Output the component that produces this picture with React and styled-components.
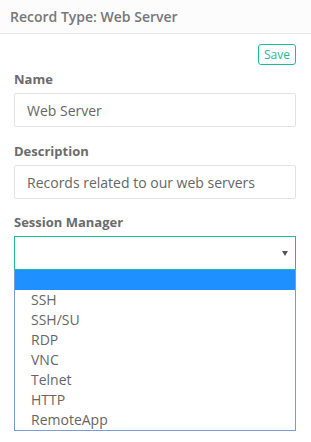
import React, { useState } from "react";
import styled, { createGlobalStyle } from "styled-components";

const GlobalStyle = createGlobalStyle`
  body {
    margin: 0;
    background: #fff;
    font-family: "Open Sans", "Liberation Sans", sans-serif;
  }
`;

const Panel = styled.div`
  width: 311px;
  height: 442px;
  background: #fff;
  overflow: hidden;
`;

const Header = styled.div`
  height: 33px;
  display: flex;
  align-items: center;
  padding: 0 10px;
  border-bottom: 1px solid #e6e6e6;
  background: #fcfcfc;
  font-size: 14px;
  font-weight: 600;
  color: #777;
`;

const Body = styled.div`
  padding: 10px 15px 0 14px;
`;

const Toolbar = styled.div`
  display: flex;
  justify-content: flex-end;
`;

const SaveButton = styled.button`
  height: 21px;
  padding: 0 5px;
  background: #fff;
  border: 1px solid #1abc9c;
  border-radius: 3px;
  color: #1abc9c;
  font-family: inherit;
  font-size: 12px;
  line-height: 19px;
  cursor: pointer;
`;

const Field = styled.div`
  margin-top: ${(p) => p.gap}px;
`;

const Label = styled.label`
  display: block;
  font-size: 13px;
  line-height: 18px;
  font-weight: 700;
  color: #6b6b6b;
  margin-bottom: 5px;
`;

const Input = styled.input`
  box-sizing: border-box;
  width: 100%;
  height: 34px;
  padding: 0 12px;
  border: 1px solid #e3e3e3;
  border-radius: 2px;
  font-family: inherit;
  font-size: 14px;
  color: #666;
  outline: none;
`;

const SelectBox = styled.div`
  box-sizing: border-box;
  height: 34px;
  border: 1px solid #1abc9c;
  display: flex;
  align-items: center;
  justify-content: flex-end;
  padding-right: 7px;
`;

const Arrow = styled.span`
  width: 0;
  height: 0;
  border-left: 3px solid transparent;
  border-right: 3px solid transparent;
  border-top: 5px solid #555;
`;

const OptionList = styled.ul`
  list-style: none;
  margin: 0;
  padding: 0;
  border: 1px solid #7b9bd6;
  border-top: none;
`;

const Option = styled.li`
  height: 20px;
  line-height: 20px;
  padding-left: 16px;
  font-size: 14px;
  color: #666;
  background: ${(p) => (p.active ? "#1e90ff" : "#fff")};
`;

const options = ["", "SSH", "SSH/SU", "RDP", "VNC", "Telnet", "HTTP", "RemoteApp"];

function App() {
  const [name, setName] = useState("Web Server");
  const [description, setDescription] = useState("Records related to our web servers");

  return (
    <Panel>
      <GlobalStyle />
      <Header>Record Type: Web Server</Header>
      <Body>
        <Toolbar>
          <SaveButton type="button">Save</SaveButton>
        </Toolbar>
        <Field gap={5}>
          <Label>Name</Label>
          <Input value={name} onChange={(e) => setName(e.target.value)} />
        </Field>
        <Field gap={15}>
          <Label>Description</Label>
          <Input value={description} onChange={(e) => setDescription(e.target.value)} />
        </Field>
        <Field gap={14}>
          <Label>Session Manager</Label>
          <SelectBox>
            <Arrow />
          </SelectBox>
          <OptionList>
            {options.map((o, i) => (
              <Option key={i} active={i === 0}>
                {o || "\u00a0"}
              </Option>
            ))}
          </OptionList>
        </Field>
      </Body>
    </Panel>
  );
}

export default App;
